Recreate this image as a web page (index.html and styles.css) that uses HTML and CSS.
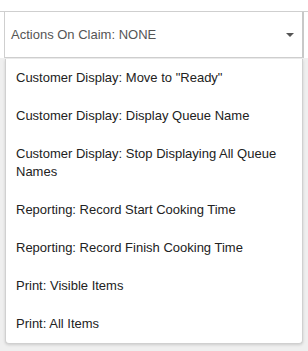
FILE: index.html
```html
<!DOCTYPE html>
<html lang="en">
<head>
    <meta charset="UTF-8">
    <title>Actions On Claim</title>
    <link rel="stylesheet" href="styles.css">
</head>
<body>
    <div class="topStrip"></div>
    <div class="selectBox">
        <span class="selectLabel">Actions On Claim: NONE</span>
        <span class="caret"></span>
    </div>
    <div class="backdrop">
        <ul class="menu">
            <li>Customer Display: Move to "Ready"</li>
            <li>Customer Display: Display Queue Name</li>
            <li>Customer Display: Stop Displaying All Queue Names</li>
            <li>Reporting: Record Start Cooking Time</li>
            <li>Reporting: Record Finish Cooking Time</li>
            <li>Print: Visible Items</li>
            <li>Print: All Items</li>
        </ul>
    </div>
</body>
</html>
```

FILE: styles.css
```css
body {
    margin: 0;
    padding: 0;
    background: #fff;
    font-family: "Liberation Sans", Arial, sans-serif;
    font-size: 13px;
    width: 308px;
    height: 351px;
    overflow: hidden;
}
.topStrip {
    height: 11px;
    border-bottom: 1px solid #cfcfcf;
}
.selectBox {
    display: flex;
    align-items: center;
    justify-content: space-between;
    height: 45px;
    margin: 0 4px 0 4px;
    padding: 0 7px 0 6px;
    border-left: 1px solid #cfcfcf;
    border-right: 2px solid #c8c8c8;
    border-bottom: 1px solid #cfcfcf;
}
.selectLabel {
    color: #555;
}
.caret {
    width: 0;
    height: 0;
    border-left: 4px solid transparent;
    border-right: 4px solid transparent;
    border-top: 4px solid #555;
    margin-right: 1px;
}
.backdrop {
    background: #efefef;
    height: 292px;
    padding: 1px 5px 0 5px;
}
.menu {
    list-style: none;
    margin: 0;
    padding: 0;
    background: #fff;
    border: 1px solid #d0d0d0;
    border-top: none;
    border-radius: 0 0 4px 4px;
    box-shadow: 0 1px 3px rgba(0, 0, 0, 0.15);
}
.menu li {
    padding: 10px 10px 10px 10px;
    line-height: 18px;
    color: #222;
}
```
